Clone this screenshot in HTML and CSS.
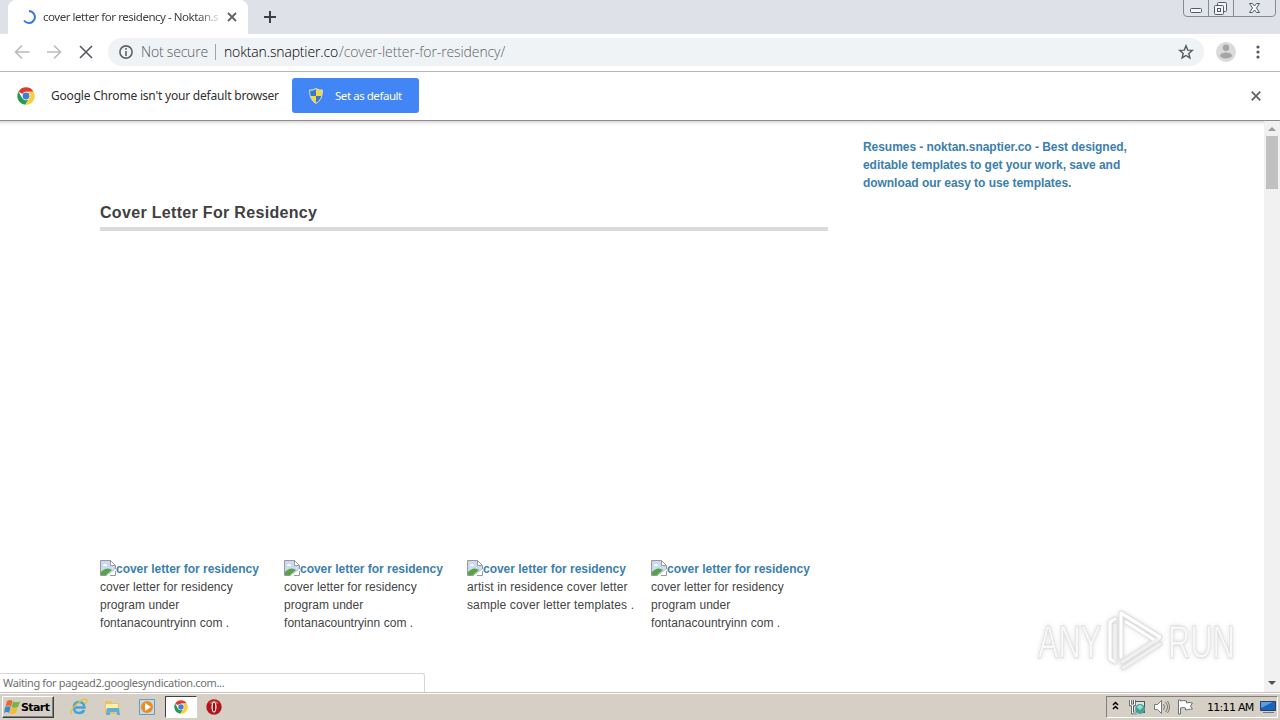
FILE: index.html
```html
<!DOCTYPE html>
<html lang="en">
<head>
<meta charset="utf-8">
<title>cover letter for residency</title>
<link rel="stylesheet" href="styles.css">
</head>
<body>
<svg class="defs" width="0" height="0">
  <symbol id="chrome" viewBox="0 0 24 24">
    <circle cx="12" cy="12" r="11.5" fill="#fff"/>
    <path d="M12 12 2 6.2A11.5 11.5 0 0 1 22 6.2H12Z" fill="#df3a2f"/>
    <path d="M2 6.2A11.5 11.5 0 0 0 11 23.5l5.5-9L12 12 7 15Z" fill="#249a54"/>
    <path d="M22 6.2A11.5 11.5 0 0 1 11 23.5l6-10L14 6.2Z" fill="#f9cf3c"/>
    <circle cx="12" cy="12" r="5.6" fill="#fff"/><circle cx="12" cy="12" r="4.6" fill="#447bd8"/>
  </symbol>
  <symbol id="broken" viewBox="0 0 16 16">
    <path d="M.5 15.500V.5h10l5 5v4L7 15.500Z" fill="#cbd9f4" stroke="#999"/>
    <path d="M10.500.5v5h5Z" fill="#fff" stroke="#999"/>
    <path d="M3 5q2-2 4 0v1H3Z" fill="#fff"/>
    <path d="M1 15v-3q5-5 9-3l2 1-6 5Z" fill="#55a643"/>
    <path d="M6 16l10-7v7Z" fill="#fff"/><path d="M10 15.500h5.500V11" fill="none" stroke="#999"/>
  </symbol>
</svg>
<div class="screen">
  <header class="tabstrip">
    <div class="tab">
      <svg class="spinner" width="14" height="14" viewBox="0 0 14 14"><path d="M7 1A6 6 0 1 1 2 10.500" fill="none" stroke="#3b78e7" stroke-width="2"/></svg>
      <span class="tab-title">cover letter for residency - Noktan.s</span>
      <svg width="10" height="10" viewBox="0 0 10 10"><path d="m1 1 8 8M9 1 1 9" stroke="#5f6368" stroke-width="1.800"/></svg>
    </div>
    <svg class="plus" width="12" height="12" viewBox="0 0 12 12"><path d="M6 0v12M0 6h12" stroke="#3c4043" stroke-width="2"/></svg>
    <svg class="winbtns" width="94" height="18" viewBox="0 0 94 18">
      <path d="M.5 0v13q0 3.500 3.500 3.500h85q3.500 0 3.500-3.500V0M25.500 0v16M50.500 0v16" fill="#e1e4ea" stroke="#858b94"/>
      <g fill="#f4f5f7" stroke="#555b66"><rect x="7.500" y="8.500" width="11" height="4" rx="1"/><rect x="34.500" y="2.500" width="9" height="9" rx="1"/><rect x="31.500" y="5.500" width="9" height="9" rx="1"/><rect x="34.500" y="8.500" width="3" height="3"/>
      <path d="M66.500 3.500h3l2 2.500 2-2.500h3l-3 4.500 3 4.500h-3l-2-2.500-2 2.500h-3l3-4.500Z"/></g>
    </svg>
  </header>
  <div class="toolbar">
    <svg class="nav" width="86" height="16" viewBox="0 0 86 16" fill="none" stroke-width="1.600"><path d="M16.500 8H3M9 1.500 2.500 8 9 14.500M34 8h13.500M41 1.500 47.500 8 41 14.500" stroke="#b9bbbe"/><path d="m67 2 12 12M79 2 67 14" stroke="#55595e"/></svg>
    <div class="omnibox">
      <svg width="14" height="14" viewBox="0 0 14 14"><circle cx="7" cy="7" r="6.100" fill="none" stroke="#5f6368" stroke-width="1.600"/><path d="M7 3v1.700M7 6v5" stroke="#5f6368" stroke-width="1.600"/></svg>
      <span class="secure">Not secure</span>
      <i class="sep"></i>
      <span class="host">noktan.snaptier.co</span><span class="path">/cover-letter-for-residency/</span>
      <svg class="star" width="16" height="16" viewBox="0 0 16 16"><path d="m8 1.800 1.700 4.300 4.600.3-3.500 3 1.100 4.500L8 11.500l-3.900 2.400 1.100-4.500-3.500-3 4.600-.3Z" fill="none" stroke="#55595e" stroke-width="1.400"/></svg>
    </div>
    <svg class="avatar" width="20" height="20" viewBox="0 0 20 20"><circle cx="10" cy="10" r="10" fill="#dadada"/><circle cx="10" cy="5.800" r="3.200" fill="#a5a5a5"/><ellipse cx="10" cy="13.500" rx="6" ry="3" fill="#a5a5a5"/></svg>
    <svg class="dots" width="4" height="14" viewBox="0 0 4 14" fill="#55595e"><circle cx="2" cy="2" r="1.600"/><circle cx="2" cy="7" r="1.600"/><circle cx="2" cy="12" r="1.600"/></svg>
  </div>
  <div class="infobar">
    <svg width="18" height="18"><use href="#chrome"/></svg>
    <span class="info-text">Google Chrome isn't your default browser</span>
    <div class="default-btn">
      <svg width="14" height="16" viewBox="0 0 14 16"><path d="M7 .5q3 2 6.500 1.500 0 10-6.500 13.500Q.5 12 .5 2 4 2.500 7 .5Z" fill="#f4d54a"/><path d="M7 1v7H1Q.5 5 1 2.600 4.500 2.500 7 1ZM7 8h5.500Q11 13 7 15Z" fill="#3579c8"/><path d="M7 .5q3 2 6.500 1.500 0 10-6.500 13.500Q.5 12 .5 2 4 2.500 7 .5Z" fill="none" stroke="#d6d8ce"/></svg>
      <span>Set as default</span>
    </div>
    <svg class="info-close" width="10" height="10" viewBox="0 0 10 10"><path d="m.7.700 8.600 8.600M9.300.7.700 9.300" stroke="#5f6368" stroke-width="1.800"/></svg>
  </div>
  <main class="view">
    <section class="content">
      <h1>Cover Letter For Residency</h1>
      <div class="gallery">
        <div class="item"><a><svg width="16" height="16"><use href="#broken"/></svg><b>cover letter for residency</b></a><p><span>cover letter for residency</span><br><span>program under</span><br><span>fontanacountryinn com .</span></p></div>
        <div class="item"><a><svg width="16" height="16"><use href="#broken"/></svg><b>cover letter for residency</b></a><p><span>cover letter for residency</span><br><span>program under</span><br><span>fontanacountryinn com .</span></p></div>
        <div class="item wide"><a><svg width="16" height="16"><use href="#broken"/></svg><b>cover letter for residency</b></a><p><span>artist in residence cover letter</span><br><span>sample cover letter templates .</span></p></div>
        <div class="item"><a><svg width="16" height="16"><use href="#broken"/></svg><b>cover letter for residency</b></a><p><span>cover letter for residency</span><br><span>program under</span><br><span>fontanacountryinn com .</span></p></div>
      </div>
    </section>
    <aside class="side">Resumes - noktan.snaptier.co - Best designed,<br>editable templates to get your work, save and<br>download our easy to use templates.</aside>
    <div class="scrollbar">
      <svg width="8" height="4" viewBox="0 0 8 4"><path d="M0 4 4 0l4 4Z" fill="#9a9a9a"/></svg>
      <i class="thumb"></i>
      <svg class="down" width="8" height="4" viewBox="0 0 8 4"><path d="m0 0 4 4 4-4Z" fill="#505050"/></svg>
    </div>
    <div class="watermark">
      <span class="any">ANY</span>
      <svg width="58" height="64" viewBox="0 0 58 64" fill="none" stroke-linejoin="round" stroke-linecap="round"><g stroke="#e0e0e0" stroke-width="5"><path d="M9 11 4 14v37l5 3M9 54V17M15 49V5l39 24-4 4L20 14M17 60l37-24M16 54l36-23"/></g><g stroke="#fff" stroke-width="3"><path d="M9 11 4 14v37l5 3M15 49V5l39 24-4 4L20 14"/></g><g stroke="#f1f1f1" stroke-width="3"><path d="M9 54V17M17 60l37-24M16 54l36-23"/></g></svg>
      <span class="run">RUN</span>
    </div>
    <div class="status">Waiting for pagead2.googlesyndication.com...</div>
  </main>
  <footer class="taskbar">
    <div class="start"><svg width="17" height="16" viewBox="0 0 17 16"><path d="M3 2q3-2 5.500 0L7 7.500Q4 5.500 1.500 7.500Z" fill="#e66a2b"/><path d="M9 2.500q3 1.500 7 0L14 8q-3.500 1.500-6.500 0Z" fill="#79b441"/><path d="M1.200 8q3-1.500 5.500 0L5 14q-2-2-5 0Z" fill="#4387c9"/><path d="M7.200 8.500q3 1.500 6.500 0L12 14q-3 2-6.500.5Z" fill="#f3bd33"/></svg><span>Start</span></div>
    <svg class="ie" width="18" height="18" viewBox="0 0 18 18" fill="none"><path d="M4 9.500h10.500Q14 4 9 4T4 9.500Q4 15 9 15q4 0 5-3" stroke="#3fa5df" stroke-width="2.500"/><path d="M2 16Q-1 13 7 6t10-4q1 1-2 4" stroke="#edbd3b" stroke-width="1.400"/></svg>
    <svg class="folder" width="17" height="17" viewBox="0 0 17 17"><path d="M1 2h6l1 2h7v11H1Z" fill="#e6c463"/><path d="M2 5h12v5H2Z" fill="#fff0a8"/><path d="M3 9h12l1 7h-3v-3H6v3H2Z" fill="#62acd8"/></svg>
    <svg class="player" width="16" height="16" viewBox="0 0 16 16"><path d="M.5.500h15v15H.5Z" fill="#c3dced" stroke="#659cc2"/><circle cx="8" cy="8" r="6" fill="#f18a1c"/><path d="m6 4 6 4-6 4Z" fill="#fff"/></svg>
    <div class="active-task"><svg width="14" height="14"><use href="#chrome"/></svg></div>
    <svg class="opera" width="16" height="16" viewBox="0 0 16 16"><circle cx="8" cy="8" r="7.700" fill="#ae171d"/><path d="M3 4q5-5 10 0L8 6Z" fill="#db5551"/><ellipse cx="8" cy="8" rx="2.500" ry="5.500" fill="#fff"/><ellipse cx="8" cy="8" rx="1.300" ry="4.500" fill="#8b1117"/></svg>
    <div class="tray">
      <svg class="chev" width="7" height="9" viewBox="0 0 7 9" fill="none" stroke="#000" stroke-width="1.500"><path d="m1 4 2.500-2.500L6 4M1 8l2.500-2.500L6 8"/></svg>
      <svg class="net" width="17" height="16" viewBox="0 0 17 16"><rect x="4.500" y="2.500" width="11" height="11" fill="#d8e9e7" stroke="#555"/><circle cx="11" cy="10" r="5" fill="#41a59a"/><path d="M8 8q3-4 6 0l-3 3Z" fill="#a7dbc9"/><path d="M1.500 1v5h4V1M3.500 6v8H8" fill="none" stroke="#555" stroke-width="2.500"/><path d="M1.500 1v5h4V1M3.500 6v8H8" fill="none" stroke="#fff"/></svg>
      <svg class="sound" width="17" height="16" viewBox="0 0 17 16" fill="none" stroke="#777"><path d="M1.500 5.500h3l4-4v13l-4-4h-3Z" fill="#fff"/><path d="M10.500 5q2 3 0 6M12.500 3q4 5 0 10M14.500 2q4 6 0 12"/></svg>
      <svg class="flag" width="17" height="16" viewBox="0 0 17 16"><path d="M1.500 1v14h2V9q3-1 5 0v2q4-1 7-1l-2-3 2-3q-4-1-6 0V2q-3-1-6 0V1Z" fill="#fff" stroke="#707070"/></svg>
      <time>11:11 AM</time>
      <svg width="16" height="14" viewBox="0 0 16 14"><path d="M.5 1.500h15v9H.5Z" fill="#1c62bd" stroke="#283f67"/><path d="M1 2h12L1 8Z" fill="#5a9de0"/><path d="M3 12.500h11" stroke="#68788c"/></svg>
    </div>
  </footer>
</div>
</body>
</html>
```
FILE: styles.css
```css
* { box-sizing: border-box; }
body { margin: 0; font-family: "Liberation Sans", Arial, sans-serif; background: #fff; }
svg { flex: none; display: block; }
.defs { position: absolute; }
.screen { width: 1280px; height: 720px; display: flex; flex-direction: column; overflow: hidden; }
.tabstrip, .toolbar, .infobar, .omnibox, .tab { display: flex; align-items: center; white-space: nowrap; font-family: "Noto Sans", sans-serif; }
.tabstrip { height: 34px; background: #dee1e7; padding-left: 8px; flex: none; }
.tab { width: 240px; height: 34px; background: #fff; border-radius: 8px 8px 0 0; padding-left: 14px; }
.tab-title { width: 175px; margin: 0 9px 0 7px; font-size: 11.5px; line-height: 16px; padding-bottom: 1px; letter-spacing: -.46px; color: #3c4043; -webkit-mask-image: linear-gradient(90deg, #000 155px, transparent 180px); mask-image: linear-gradient(90deg, #000 155px, transparent 180px); }
.plus { margin-left: 16px; }
.winbtns { margin: 0 3px 0 auto; align-self: flex-start; }
.toolbar { height: 38px; flex: none; border-bottom: 1px solid #b5b6b8; padding-bottom: 2px; }
.nav { margin: 0 9px 0 13px; }
.omnibox { width: 1096px; height: 28px; border-radius: 14px; background: #f0f3f5; padding: 0 10px 0 11px; font-family: "Open Sans", sans-serif; font-size: 14px; }
.secure { margin-left: 8px; width: 75px; letter-spacing: -.2px; color: #55595e; font-weight: 300; }
.sep { width: 1px; height: 16px; background: #9fa3a8; margin: 0 8px 0 -1px; }
.host, .path { font-weight: 300; }
.host { color: #000; width: 115px; letter-spacing: -.15px; }
.path { color: #5f6368; letter-spacing: -.1px; }
.star { margin-left: auto; }
.avatar { margin-left: 12px; }
.dots { margin-left: 20px; }
.infobar { height: 49px; flex: none; padding: 0 0 1px 17px; border-bottom: 1px solid #8e8e8e; }
.info-text { width: 230px; margin: 0 11px 0 16px; font-size: 12px; letter-spacing: -.2px; color: #303030; }
.default-btn { display: flex; align-items: center; gap: 12px; width: 127px; height: 35px; padding-left: 17px; background: #4285f4; color: #fff; border-radius: 3px; font-size: 11.5px; letter-spacing: -.45px; }
.default-btn span { padding-bottom: 1px; }
.info-close { margin: 0 19px 0 auto; }
.view { position: relative; flex: 1; display: flex; min-height: 0; background: linear-gradient(#d9d9d9, #f8f8f8 3px, #fff 5px); white-space: nowrap; }
.content { width: 728px; margin-left: 100px; flex: none; }
h1 { margin: 79px 0 0; height: 31px; border-bottom: 4px solid #dadada; font-size: 16px; line-height: 26px; letter-spacing: .32px; color: #404040; }
.gallery { display: grid; grid-template-columns: 184px 183px 184px 177px; margin-top: 329px; font-size: 12px; line-height: 18px; color: #444; }
.item a { display: flex; height: 18px; color: #3b80ad; }
.item p { margin: 0; letter-spacing: .05px; }
.wide p { letter-spacing: .12px; }
.item a b { font-size: 12px; letter-spacing: -.02px; }
.side { width: 400px; margin-left: 35px; padding-top: 17px; font-size: 12px; line-height: 18px; font-weight: bold; letter-spacing: -.05px; color: #3b80ad; }
.scrollbar { width: 16px; margin-left: auto; display: flex; flex-direction: column; align-items: center; padding: 6px 0 7px; background: #f1f1f1; }
.thumb { width: 12px; height: 53px; background: #c1c1c1; margin-top: 5px; }
.down { margin-top: auto; }
.watermark { position: absolute; left: 1038px; top: 487px; height: 64px; display: flex; align-items: center; font-size: 46px; filter: drop-shadow(0 0 2px #dcdcdc); }
.watermark span { width: 64px; padding-top: 3px; color: #f9f9f9; -webkit-text-stroke: .8px #dedede; }
.watermark svg { margin: 0 4px; }
.any, .run { transform: scaleX(.67); transform-origin: left; }
.status { position: absolute; left: 0; bottom: 0; width: 425px; height: 19px; padding-left: 3px; border: 1px solid #d6d6d6; border-left: 0; border-bottom: 0; border-top-right-radius: 3px; background: #fff; color: #6f6f6f; font: 11px/17px "Noto Sans", sans-serif; letter-spacing: -.36px; }
.taskbar { height: 28px; flex: none; background: #d5cfc6; border-top: 1px solid #c4c1bc; box-shadow: inset 0 1px #fff; display: flex; align-items: center; padding: 1px 2px 0; }
.start { display: flex; align-items: center; width: 52px; height: 22px; border: 1px solid; border-color: #fff #404040 #404040 #fff; box-shadow: inset -1px -1px #808080; font: bold 11px "DejaVu Sans", sans-serif; letter-spacing: -.6px; padding-left: 1px; color: #000; }
.ie { margin-left: 16px; }
.folder { margin-left: 16px; }
.player { margin-left: 18px; }
.active-task { width: 32px; height: 22px; margin: 0 9px 0 10px; display: grid; place-items: center; background: #fff; border: 1px solid; border-color: #404040 #fff #fff #404040; }
.tray { margin-left: auto; width: 172px; height: 22px; display: flex; align-items: center; padding-left: 5px; border: 1px solid; border-color: #808080 #fff #fff #808080; }
.net { margin-left: 10px; }
.chev { margin-bottom: 3px; }
.sound, .flag { margin-left: 7px; }
.tray time { width: 48px; margin: 0 5px 0 13px; white-space: nowrap; font: 11px "DejaVu Sans", sans-serif; letter-spacing: -.7px; color: #000; }
```
